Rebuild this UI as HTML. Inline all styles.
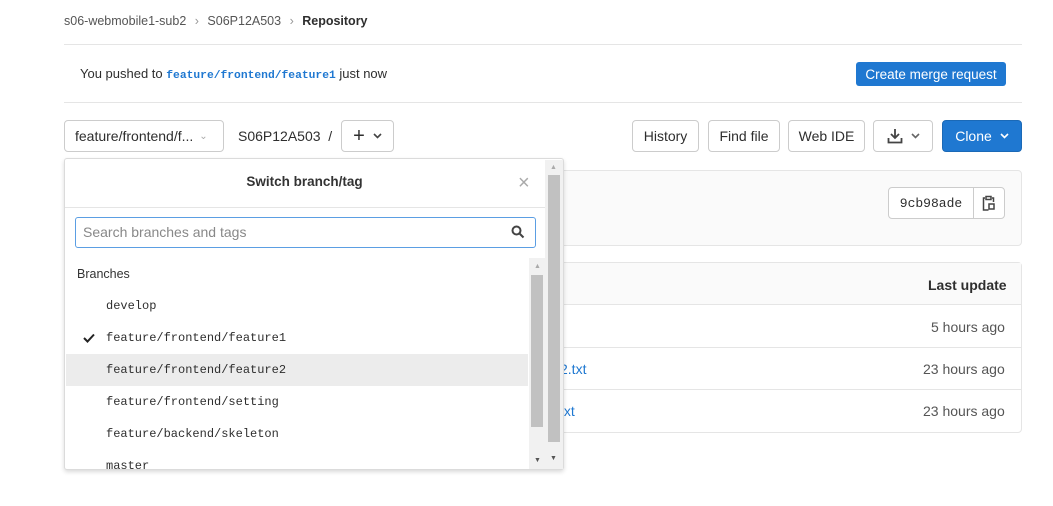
<!DOCTYPE html>
<html><head><meta charset="utf-8"><style>
*{box-sizing:border-box;margin:0;padding:0}
body{width:1053px;height:506px;background:#fff;font-family:"Liberation Sans",sans-serif;font-size:14px;color:#2e2e2e;position:relative;overflow:hidden}
.a{position:absolute}
.btn{position:absolute;border:1px solid #ccc;border-radius:4px;background:#fff;height:32px;display:flex;align-items:center;justify-content:center;color:#2e2e2e;font-size:14px}
.mono{font-family:"Liberation Mono",monospace}
.item{position:absolute;left:106px;font-family:"Liberation Mono",monospace;font-size:12px;color:#2e2e2e}
</style></head><body>
<div class="a" style="left:64px;top:14px;font-size:12.5px;color:#555">s06-webmobile1-sub2 <span style="color:#999;margin:0 5px">›</span> S06P12A503 <span style="color:#999;margin:0 5px">›</span> <b style="color:#2e2e2e;font-weight:600">Repository</b></div>
<div class="a" style="left:64px;top:44px;width:958px;height:1px;background:#e5e5e5"></div>
<div class="a" style="left:80px;top:66px;font-size:13px">You pushed to <span class="mono" style="color:#1f78d1;font-size:11.3px;font-weight:bold">feature/frontend/feature1</span> just now</div>
<div class="a" style="left:856px;top:62px;width:150px;height:24px;background:#1f78d1;border-radius:3px;color:#fff;font-size:13.5px;display:flex;align-items:center;justify-content:center">Create merge request</div>
<div class="a" style="left:64px;top:102px;width:958px;height:1px;background:#e5e5e5"></div>

<div class="btn" style="left:64px;top:120px;width:160px;justify-content:flex-start;padding-left:10px">feature/frontend/f... <span style="color:#aaa;margin-left:6px;font-size:10px">&#8964;</span></div>
<div class="a" style="left:238px;top:128px">S06P12A503 &nbsp;/</div>
<div class="btn" style="left:341px;top:120px;width:53px"><span style="font-size:20px;margin-right:8px">+</span><svg width="9" height="6"><path d="M1 1l3.5 3.5L8 1" stroke="#444" stroke-width="1.6" fill="none"/></svg></div>

<div class="btn" style="left:632px;top:120px;width:67px">History</div>
<div class="btn" style="left:708px;top:120px;width:72px">Find file</div>
<div class="btn" style="left:788px;top:120px;width:77px">Web IDE</div>
<div class="btn" style="left:873px;top:120px;width:60px"><svg width="16" height="16" style="margin-right:8px"><path d="M8 1v9M4 6l4 4 4-4M1.5 10v4.5h13V10" stroke="#444" stroke-width="1.8" fill="none"/></svg><svg width="9" height="6"><path d="M1 1l3.5 3.5L8 1" stroke="#666" stroke-width="1.6" fill="none"/></svg></div>
<div class="btn" style="left:942px;top:120px;width:80px;background:#1f78d1;border-color:#1b69b6;color:#fff">Clone <svg width="9" height="6" style="margin-left:8px"><path d="M1 1l3.5 3.5L8 1" stroke="#fff" stroke-width="1.6" fill="none"/></svg></div>

<div class="a" style="left:540px;top:170px;width:482px;height:76px;background:#fafafa;border:1px solid #e5e5e5;border-radius:4px"></div>
<div class="btn" style="left:888px;top:187px;width:86px;border-radius:4px 0 0 4px;font-family:'Liberation Mono',monospace;font-size:13px">9cb98ade</div>
<div class="btn" style="left:973px;top:187px;width:32px;border-radius:0 4px 4px 0"><svg width="14" height="16"><path d="M3 3H1.5v12h5M10 3h1.5v4M4 1.5h5v3H4z" stroke="#444" stroke-width="1.5" fill="none"/><rect x="7" y="9" width="5" height="5" stroke="#444" stroke-width="1.5" fill="none"/></svg></div>

<div class="a" style="left:540px;top:262px;width:482px;height:171px;border:1px solid #e5e5e5;border-radius:4px"></div>
<div class="a" style="left:541px;top:263px;width:480px;height:42px;background:#fafafa;border-bottom:1px solid #e5e5e5"></div>
<div class="a" style="left:928px;top:277px;font-weight:bold">Last update</div>
<div class="a" style="left:541px;top:347px;width:480px;height:1px;background:#e5e5e5"></div>
<div class="a" style="left:541px;top:389px;width:480px;height:1px;background:#e5e5e5"></div>
<div class="a" style="left:931px;top:319px;color:#555">5 hours ago</div>
<div class="a" style="left:923px;top:361px;color:#555">23 hours ago</div>
<div class="a" style="left:923px;top:403px;color:#555">23 hours ago</div>
<div class="a" style="left:560px;top:361px;color:#1f78d1">2.txt</div>
<div class="a" style="left:560px;top:403px;color:#1f78d1">txt</div>

<div class="a" style="left:64px;top:158px;width:500px;height:312px;background:#fff;border:1px solid #dbdbdb;border-radius:3px;box-shadow:0 2px 4px rgba(0,0,0,.15)"></div>
<div class="a" style="left:64px;top:174px;width:481px;text-align:center;font-size:13.5px;color:#333;font-weight:600">Switch branch/tag</div>
<div class="a" style="left:518px;top:172px;font-size:20px;color:#aaa">×</div>
<div class="a" style="left:65px;top:207px;width:480px;height:1px;background:#e5e5e5"></div>
<div class="a" style="left:75px;top:217px;width:461px;height:31px;border:1px solid #5b9ee3;border-radius:3px"></div>
<div class="a" style="left:83px;top:224px;color:#888">Search branches and tags</div>
<svg class="a" style="left:511px;top:225px" width="14" height="14"><circle cx="5.5" cy="5.5" r="4" stroke="#444" stroke-width="2" fill="none"/><path d="M8.5 8.5l4 4" stroke="#444" stroke-width="2"/></svg>
<div class="a" style="left:77px;top:267px;font-size:12.5px;color:#333">Branches</div>
<div class="a" style="left:66px;top:354px;width:462px;height:32px;background:#ececec"></div>
<div class="item" style="top:299px">develop</div>
<svg class="a" style="left:83px;top:333px" width="12" height="10"><path d="M1 5l3.5 3.5L11 1.5" stroke="#222" stroke-width="2" fill="none"/></svg>
<div class="item" style="top:331px">feature/frontend/feature1</div>
<div class="item" style="top:363px">feature/frontend/feature2</div>
<div class="item" style="top:395px">feature/frontend/setting</div>
<div class="item" style="top:427px">feature/backend/skeleton</div>
<div class="item" style="top:459px;height:10px;overflow:hidden">master</div>
<div class="a" style="left:529px;top:258px;width:16px;height:211px;background:#f1f1f1"></div>
<div class="a" style="left:531px;top:275px;width:12px;height:152px;background:#c1c1c1"></div>
<div class="a" style="left:534px;top:263px;font-size:7px;color:#aaa">▲</div>
<div class="a" style="left:534px;top:457px;font-size:7px;color:#555">▼</div>
<div class="a" style="left:545px;top:160px;width:18px;height:309px;background:#f1f1f1"></div>
<div class="a" style="left:548px;top:175px;width:12px;height:267px;background:#c1c1c1"></div>
<div class="a" style="left:550px;top:164px;font-size:7px;color:#aaa">▲</div>
<div class="a" style="left:550px;top:455px;font-size:7px;color:#555">▼</div>
</body></html>
